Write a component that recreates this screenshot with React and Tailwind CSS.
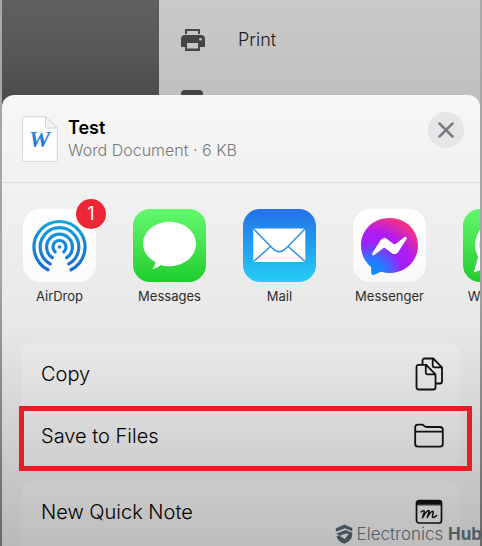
import React from "react";

function PrintIcon() {
  return (
    <svg viewBox="0 0 26 24" className="h-6 w-[26px]" aria-hidden="true">
      <path fill="#454645" d="M5 1h15v5H5zM4 7h17a4 4 0 0 1 4 4v8h-5v4H5v-4H1v-8a4 4 0 0 1 4-4z" />
      <path fill="#c5c5c5" d="M7 3h11v3.500H7zM7 15h11v5.500H7z" />
      <circle cx="20.500" cy="11.200" r="1.300" fill="#c5c5c5" />
    </svg>
  );
}

function WordFileIcon() {
  return (
    <svg viewBox="0 0 36 46" className="h-[46px] w-9 shrink-0" aria-hidden="true">
      <defs>
        <linearGradient id="word" x1="0" y1="0" x2="0" y2="1">
          <stop offset="0" stopColor="#2f9be8" />
          <stop offset="1" stopColor="#1c62c4" />
        </linearGradient>
      </defs>
      <path d="M2.500 .7H23.500L35.300 12v31.300a2 2 0 0 1-2 2H2.500a2 2 0 0 1-2-2V2.700a2 2 0 0 1 2-2z" fill="#fefefe" stroke="#d6d6d6" />
      <path d="M23.500 .7V10a2 2 0 0 0 2 2h9.800z" fill="#f4f4f4" stroke="#d2d2d2" />
      <text x="17.500" y="31" textAnchor="middle" fontFamily="Liberation Serif, serif" fontWeight="700" fontStyle="italic" fontSize="24" fill="url(#word)">W</text>
    </svg>
  );
}

function AirDropIcon() {
  const radii = [25.5, 19.3, 12.9, 6.5];
  // Each ring is open at the bottom, where the wedge cuts through.
  const angles = [27, 29, 34, 42];
  return (
    <svg viewBox="0 0 73 73" className="size-[73px]" aria-hidden="true">
      <defs>
        <linearGradient id="air" gradientUnits="userSpaceOnUse" x1="0" y1="10" x2="0" y2="64">
          <stop offset="0" stopColor="#12a5dc" />
          <stop offset="1" stopColor="#1769cf" />
        </linearGradient>
      </defs>
      <g fill="none" stroke="url(#air)" strokeWidth="3.200" strokeLinecap="round">
        {radii.map((r, i) => {
          const a = (angles[i] * Math.PI) / 180;
          const dx = r * Math.sin(a);
          const dy = r * Math.cos(a);
          return <path key={r} d={`M${36.5 - dx} ${38 + dy}A${r} ${r} 0 1 1 ${36.5 + dx} ${38 + dy}`} />;
        })}
      </g>
      <circle cx="36.500" cy="38" r="1.800" fill="#1b82d6" />
    </svg>
  );
}

function MessagesIcon() {
  return (
    <svg viewBox="0 0 73 73" className="size-[73px]" aria-hidden="true">
      <path fill="#fff" d="M36.500 12.800c14.700 0 26.500 9.900 26.500 22.200s-11.800 22.200-26.500 22.200c-3.200 0-6.200-.5-9-1.300-2.200 2.100-5 3.600-8.200 4.100 1.900-2 3.100-4.500 3.200-6.900C14.900 49.200 10 42.500 10 35c0-12.300 11.800-22.200 26.500-22.200z" />
    </svg>
  );
}

function MailIcon() {
  return (
    <svg viewBox="0 0 73 73" className="size-[73px]" aria-hidden="true">
      <rect x="10.300" y="19.500" width="52" height="33.500" rx="2" fill="#fff" />
      <g fill="none" stroke="#2c93e4" strokeWidth="1.500">
        <path d="M11 20.300l18.500 19c4.200 4.500 9.400 4.500 13.600 0l18.500-19" />
        <path d="M11 52.300l16.700-15M61.700 52.300L45 37.300" />
      </g>
    </svg>
  );
}

function MessengerIcon() {
  return (
    <svg viewBox="0 0 73 73" className="size-[73px]" aria-hidden="true">
      <defs>
        <radialGradient id="msgr" gradientUnits="userSpaceOnUse" cx="19" cy="64" r="61">
          <stop offset="0" stopColor="#0695ff" />
          <stop offset=".22" stopColor="#2878ff" />
          <stop offset=".5" stopColor="#a020fa" />
          <stop offset=".68" stopColor="#b11cf0" />
          <stop offset="1" stopColor="#ff3377" />
        </radialGradient>
      </defs>
      <path fill="url(#msgr)" d="M36.500 9C52.500 9 65 20.800 65 36.500S52.500 64 36.500 64c-3 0-5.800-.4-8.400-1.200l-7 3c-1.500.6-2.600 0-2.800-1.500L18 58C11.700 52.700 8 45.300 8 36.500 8 20.800 20.500 9 36.500 9z" />
      <path fill="#fff" d="M19.300 44.300l8.400-13.200a4.300 4.300 0 0 1 6.200-1.200l6.700 5a1.700 1.700 0 0 0 2 0l9-6.800c1.200-1 2.800.5 2 1.800L45.200 43a4.300 4.300 0 0 1-6.200 1.200l-6.700-5a1.700 1.700 0 0 0-2 0l-9 6.900c-1.200.9-2.800-.5-2-1.800z" />
    </svg>
  );
}

function WhatsAppIcon() {
  return (
    <svg viewBox="0 0 73 73" className="size-[73px]" aria-hidden="true">
      <path fill="none" stroke="#fff" strokeWidth="4.500" d="M14 60l3.600-12.500A23 23 0 1 1 26 55.800z" />
      <path fill="#fff" d="M28 25c2-2 4-1 5 2l2 5-3 4c2 5 5 7 9 9l4-4 7 4c0 6-4 8-9 8-10-1-20-12-19-22 0-3 2-4 4-6z" />
    </svg>
  );
}

function CopyIcon() {
  return (
    <svg viewBox="0 0 30 34" className="h-[34px] w-[30px]" fill="none" stroke="#101010" strokeWidth="1.800" strokeLinejoin="round" aria-hidden="true">
      <path d="M8.500 7V3.500a2 2 0 0 1 2-2h8.700L28 10.300v14.200a2 2 0 0 1-2 2h-4.500M18.700 1.500v7.300a1.500 1.500 0 0 0 1.500 1.500H28" />
      <path d="M4.500 7.800h7.700l9.300 9.500v13.200a2 2 0 0 1-2 2h-15a2 2 0 0 1-2-2V9.800a2 2 0 0 1 2-2zM11.800 7.800v8a1.500 1.500 0 0 0 1.500 1.500h8.200" />
    </svg>
  );
}

function FolderIcon() {
  return (
    <svg viewBox="0 0 30 26" className="h-[26px] w-[30px]" fill="none" stroke="#101010" strokeWidth="1.800" strokeLinejoin="round" aria-hidden="true">
      <path d="M1.200 21V4.200c0-1.700.9-2.600 2.600-2.600h3.500c1.400 0 2 .4 2.800 1.200.8.800 1.400 1.200 2.800 1.200H26c1.800 0 2.800 1 2.800 2.800V21c0 1.800-1 2.700-2.800 2.700H4c-1.800 0-2.800-.9-2.800-2.700zM1.200 8.700h27.600" />
    </svg>
  );
}

function QuickNoteIcon() {
  return (
    <svg viewBox="0 0 30 26" className="h-[26px] w-[30px]" fill="none" stroke="#101010" strokeLinejoin="round" strokeLinecap="round" aria-hidden="true">
      <rect x="2.500" y="1.500" width="25" height="22.500" rx="2.500" strokeWidth="1.700" />
      <path d="M3 5.500V4a2 2 0 0 1 2-2h20a2 2 0 0 1 2 2v1.500z" fill="#101010" />
      <path strokeWidth="1.500" d="M7 13c2.300-2 3.600-1.700 3.200.2L8.500 18.800c2-3.600 4.500-7.300 6-7.300 1.700 0-.7 4.200-1.300 7 2-3.700 4.300-6.300 5.500-6.300 1.700 0-1.500 6.300.3 6.300 1.200 0 2.300-.7 3.700-2" />
    </svg>
  );
}

function ShieldLogo() {
  return (
    <svg viewBox="0 0 18 20" className="h-5 w-[18px]" aria-hidden="true">
      <path fill="#44525a" d="M.8 4.500L9.300.6l8 3.400v3.200L10 4.200 3.600 6.700.8 7.500z" />
      <path fill="#44525a" d="M1.200 9.800l9.600-3.700 6.500 2.700-.2 3c-.5 3.600-3.300 6.300-7.800 7.900-4.300-1.500-6.900-4-7.800-7.200l2.600-1 5.800 3.600 4-5.300-3.200-.4-6 2.300z" />
    </svg>
  );
}

const apps = [
  { name: "AirDrop", icon: <AirDropIcon />, tile: "bg-linear-to-b from-white to-[#fafafa]", badge: "1" },
  { name: "Messages", icon: <MessagesIcon />, tile: "bg-linear-to-b from-[#63f86d] to-[#19ce29]" },
  { name: "Mail", icon: <MailIcon />, tile: "bg-linear-to-b from-[#2670e8] to-[#27cdf2]" },
  { name: "Messenger", icon: <MessengerIcon />, tile: "bg-linear-to-b from-white to-[#f8f8f8]" },
  { name: "WhatsApp", icon: <WhatsAppIcon />, tile: "bg-linear-to-b from-[#63f76b] to-[#1ccb2c]" },
];

function ActionRow({ label, icon, highlighted }) {
  return (
    <li className="relative">
      <button type="button" className="flex h-[62px] w-full items-center justify-between pr-4 pl-5 text-left text-xl font-light text-black">
        {label}
        {icon}
      </button>
      {highlighted && (
        <span className="pointer-events-none absolute top-px -right-3 -left-[2px] h-[65px] border-[5px] border-[#e81d26]" />
      )}
    </li>
  );
}

export default function App() {
  return (
    <div className="relative h-screen overflow-hidden bg-linear-to-b from-[#a8a8a8] via-[#a4a4a4] to-[#686868] px-0.5 font-['Inter','Liberation_Sans',sans-serif]">
      <div className="flex h-full flex-col overflow-hidden">
        <section className="flex h-[107px] shrink-0">
          <div className="w-[157px] shrink-0 bg-linear-to-b from-[#606063] via-[#565757] to-[#494b48]" />
          <div className="flex-1 bg-linear-to-b from-[#c9c9c9] to-[#bec0bd] pt-[26px] pl-[21px]">
            <button type="button" className="flex h-7 items-center gap-8 text-lg font-light text-[#1c1c1c]">
              <PrintIcon />
              Print
            </button>
            <div className="mt-9 ml-px h-5 w-[22px] rounded-sm bg-[#434543]" />
          </div>
        </section>

        <main className="-mt-3 flex-1 rounded-t-xl bg-linear-to-b from-[#f7f7f7] via-[#e8e8e8] to-[#b8b8b8]">
          <header className="flex h-[88px] items-start border-b border-[#dcdcdc] pt-[21px] pr-4 pl-5">
            <WordFileIcon />
            <div className="ml-2.5 flex-1">
              <h1 className="text-lg leading-6 font-semibold text-black">Test</h1>
              <p className="text-base leading-5 font-light text-[#79797b]">Word Document · 6 KB</p>
            </div>
            <button type="button" aria-label="Close" className="-mt-1 flex size-9 items-center justify-center rounded-full bg-[#e6e6e8]">
              <svg viewBox="0 0 16 16" className="size-4" stroke="#7c7c80" strokeWidth="2.500" strokeLinecap="round" aria-hidden="true">
                <path d="M1.500 1.500l13 13M14.500 1.500l-13 13" />
              </svg>
            </button>
          </header>

          <ul className="flex h-[160px] gap-[37px] overflow-hidden pt-[26px] pl-[21px]">
            {apps.map((app) => (
              <li key={app.name} className="w-[73px] shrink-0">
                <button type="button" className="relative flex w-full flex-col items-center text-[13px] leading-5 text-[#2c2c2c]">
                  <span className={`rounded-[17px] ${app.tile}`}>{app.icon}</span>
                  <span className="mt-1 whitespace-nowrap">{app.name}</span>
                  {app.badge && (
                    <span className="absolute -top-2.5 -right-2.5 flex size-[30px] items-center justify-center rounded-full bg-[#ed2736] text-lg text-white">
                      {app.badge}
                    </span>
                  )}
                </button>
              </li>
            ))}
          </ul>

          <div className="space-y-3 pr-5 pl-[19px]">
            <ul className="h-[126px] rounded-xl bg-linear-to-b from-[#e9e9e9] to-[#cecece]">
              <ActionRow label="Copy" icon={<CopyIcon />} />
              <ActionRow label="Save to Files" icon={<FolderIcon />} highlighted />
            </ul>
            <ul className="h-[70px] rounded-t-xl bg-linear-to-b from-[#cbcbcb] to-[#bcbcbc]">
              <ActionRow label="New Quick Note" icon={<QuickNoteIcon />} />
            </ul>
          </div>
        </main>
      </div>

      <div className="absolute right-0 bottom-0 flex items-center gap-1 text-[17px] leading-6 whitespace-nowrap text-[#4f5d66]">
        <ShieldLogo />
        <span className="font-light">
          Electronics <strong className="font-bold">Hub</strong>
        </span>
      </div>
    </div>
  );
}
